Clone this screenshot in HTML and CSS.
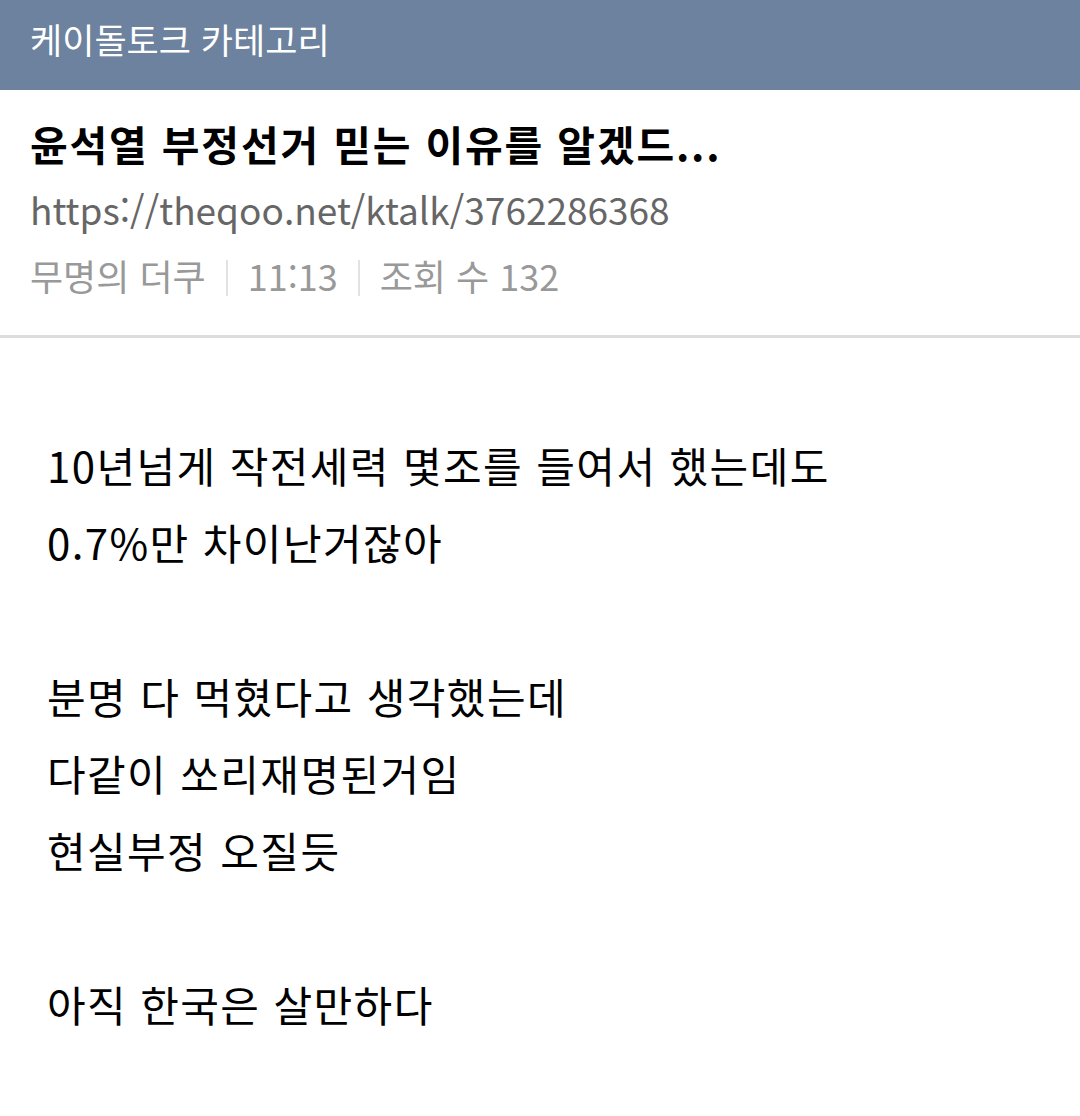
FILE: index.html
```html
<!DOCTYPE html>
<html lang="ko">
<head>
<meta charset="utf-8">
<link rel="stylesheet" href="styles.css">
</head>
<body>
<header class="topbar">케이돌토크 카테고리</header>
<section class="post-head">
  <h1 class="title">윤석열 부정선거 믿는 이유를 알겠드...</h1>
  <div class="url">https://theqoo.net/ktalk/3762286368</div>
  <div class="meta"><span>무명의 더쿠</span><span class="sep"></span><span>11:13</span><span class="sep"></span><span>조회 수 132</span></div>
</section>
<article class="content">
  <p>10년넘게 작전세력 몇조를 들여서 했는데도</p>
  <p>0.7%만 차이난거잖아</p>
  <p>&nbsp;</p>
  <p>분명 다 먹혔다고 생각했는데</p>
  <p>다같이 쏘리재명된거임</p>
  <p>현실부정 오질듯</p>
  <p>&nbsp;</p>
  <p>아직 한국은 살만하다</p>
</article>
</body>
</html>
```
FILE: styles.css
```css
* { box-sizing: border-box; }
html, body { margin: 0; padding: 0; background: #fff; }
body {
  width: 1080px;
  height: 1116px;
  overflow: hidden;
  font-family: "Noto Sans CJK KR", "Noto Sans", sans-serif;
}
.topbar {
  height: 90px;
  background: #6c829e;
  color: #fff;
  font-size: 35px;
  line-height: 78px;
  padding-left: 30px;
}
.post-head {
  padding: 20px 30px 0 30px;
  height: 248px;
  border-bottom: 3px solid #dcdcdc;
}
.title {
  margin: 0;
  font-size: 41px;
  font-weight: 700;
  line-height: 66px;
  color: #000;
  letter-spacing: 1.8px;
}
.url {
  font-size: 37px;
  line-height: 66px;
  color: #666;
}
.meta {
  display: flex;
  align-items: center;
  font-size: 36px;
  line-height: 66px;
  color: #999;
}
.sep {
  width: 2px;
  height: 36px;
  background: #e2e2e2;
  margin: 6px 20px 0 20px;
}
.content {
  padding: 88px 0 0 47px;
}
.content p {
  margin: 0;
  font-size: 42px;
  line-height: 77px;
  color: #000;
  letter-spacing: 1.4px;
}
```
